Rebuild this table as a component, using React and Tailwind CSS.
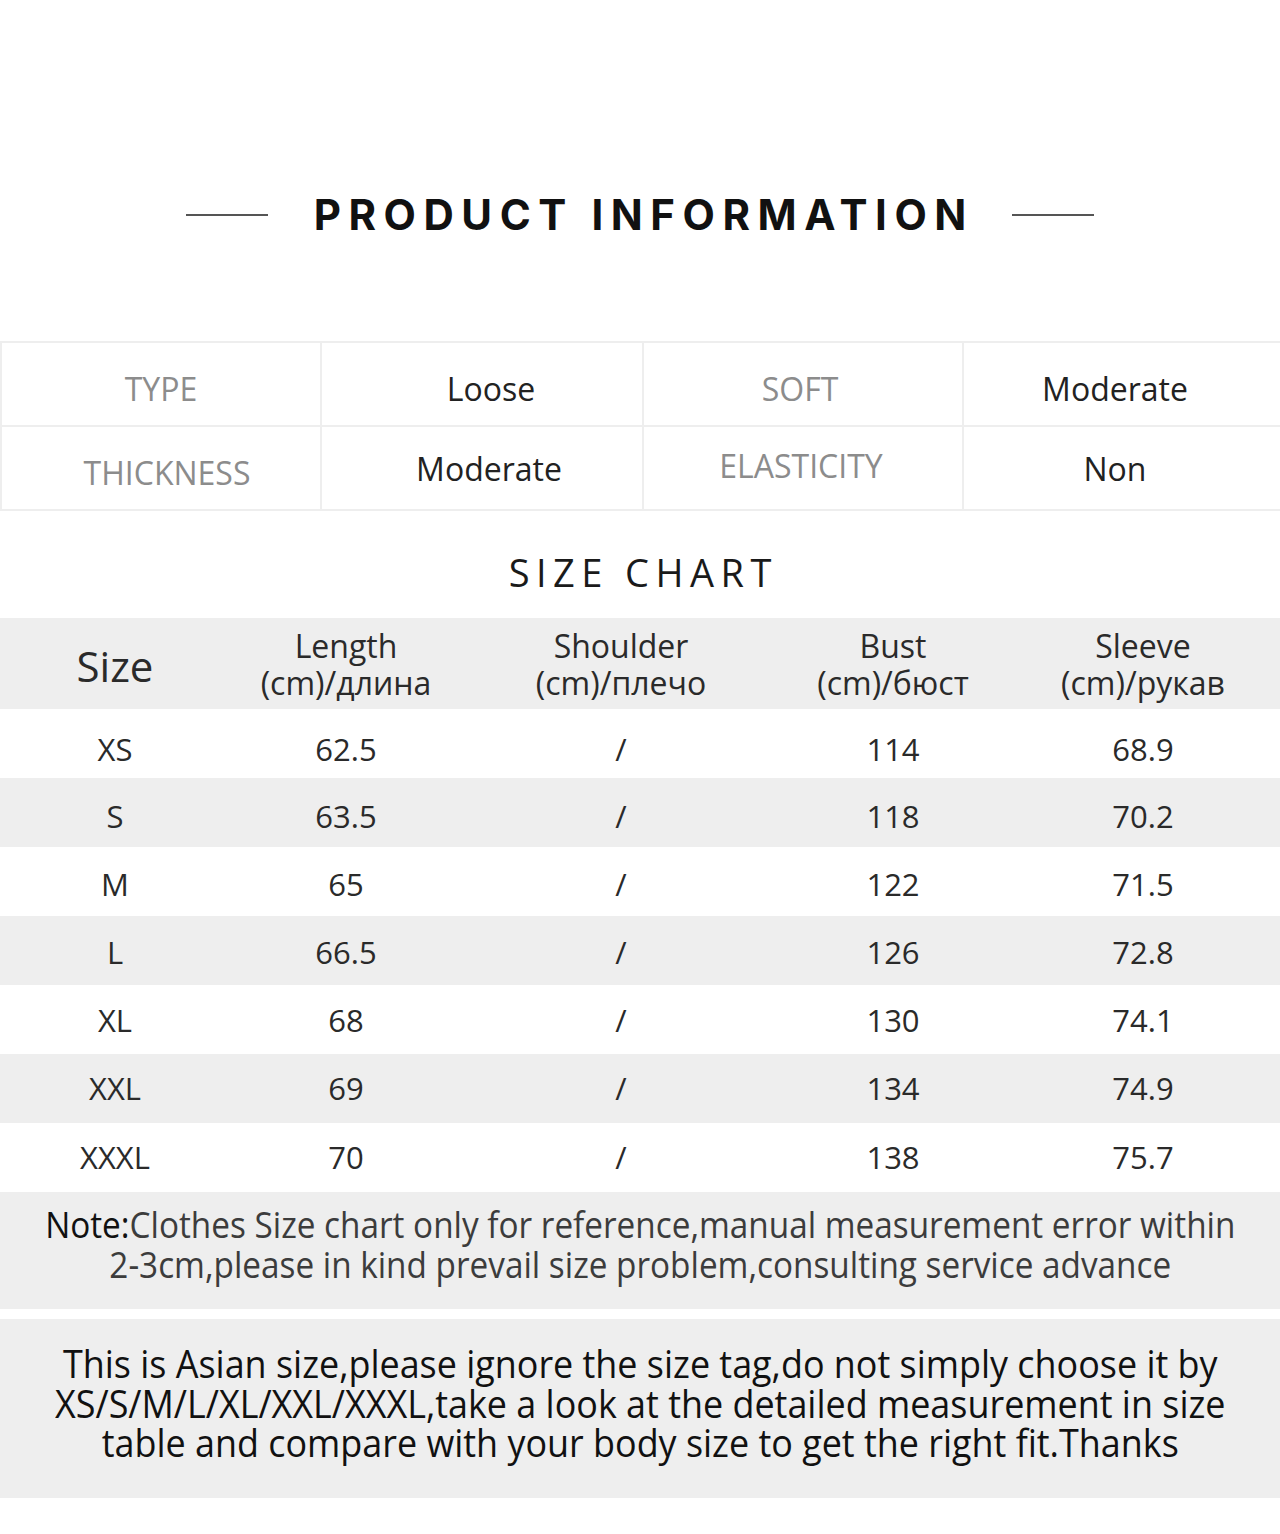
import React from "react";

const rows = [
  ["XS", "62.5", "/", "114", "68.9"],
  ["S", "63.5", "/", "118", "70.2"],
  ["M", "65", "/", "122", "71.5"],
  ["L", "66.5", "/", "126", "72.8"],
  ["XL", "68", "/", "130", "74.1"],
  ["XXL", "69", "/", "134", "74.9"],
  ["XXXL", "70", "/", "138", "75.7"],
];

const rowPad = ["pt-[12px]", "pt-[8px]", "pt-[6px]", "pt-[4px]", "pt-[2px]", "pt-0", "pt-0"];

const gridCols = "grid grid-cols-[230px_232px_318px_226px_274px]";

const info = [
  [
    { t: "TYPE", c: "text-[#8c8c8c] mt-[10px]" },
    { t: "Loose", c: "text-[#222] mt-[10px] ml-[18px]" },
    { t: "SOFT", c: "text-[#8c8c8c] mt-[10px] mr-[6px]" },
    { t: "Moderate", c: "text-[#222] mt-[10px] mr-[14px]" },
  ],
  [
    { t: "THICKNESS", c: "text-[#8c8c8c] mt-[10px] ml-[12px]" },
    { t: "Moderate", c: "text-[#222] mt-[2px] ml-[14px]" },
    { t: "ELASTICITY", c: "text-[#8c8c8c] mt-[-4px] mr-[4px]" },
    { t: "Non", c: "text-[#222] mt-[2px] mr-[14px]" },
  ],
];

export default function App() {
  return (
    <div
      className="w-[1280px] h-[1534px] bg-white overflow-hidden"
      style={{ fontFamily: "'Open Sans', 'Noto Sans', sans-serif" }}
    >
      {/* Title */}
      <div className="h-[341px] pt-[180px]">
        <div className="h-[70px] flex items-center justify-center">
          <div className="w-[82px] h-[2px] bg-[#555]" />
          <div
            className="mx-[38px] text-[42px] leading-none font-bold tracking-[0.18em] text-[#111] pl-[0.18em]"
            style={{ fontFamily: "Inter, 'Liberation Sans', sans-serif" }}
          >
            PRODUCT INFORMATION
          </div>
          <div className="w-[82px] h-[2px] bg-[#555]" />
        </div>
      </div>

      {/* Info table */}
      <div className="grid grid-cols-[320px_322px_320px_318px] border-t-2 border-l-2 border-[#eeeeee] text-[32px]">
        {info.map((r, ri) =>
          r.map((cell, ci) => (
            <div
              key={ri + "-" + ci}
              className="h-[84px] flex items-center justify-center border-r-2 border-b-2 border-[#eeeeee]"
            >
              <span className={cell.c}>{cell.t}</span>
            </div>
          ))
        )}
      </div>

      {/* Size chart title */}
      <div className="h-[107px] flex items-center justify-center pt-[14px]">
        <div className="text-[38px] leading-none tracking-[0.17em] text-[#1a1a1a] pl-[0.17em]">
          SIZE CHART
        </div>
      </div>

      {/* Header */}
      <div className={gridCols + " h-[91px] bg-[#eeeeee] text-[#2a2a2a]"}>
        <div className="flex items-center justify-center text-[42px] pt-[4px]">Size</div>
        {[
          ["Length", "(cm)/длина"],
          ["Shoulder", "(cm)/плечо"],
          ["Bust", "(cm)/бюст"],
          ["Sleeve", "(cm)/рукав"],
        ].map((h, i) => (
          <div key={i} className="flex flex-col items-center justify-center text-[32px] leading-[37px]">
            <div>{h[0]}</div>
            <div>{h[1]}</div>
          </div>
        ))}
      </div>

      {/* Rows */}
      {rows.map((r, i) => (
        <div
          key={i}
          className={
            gridCols +
            " h-[69px] text-[31px] text-[#2a2a2a] " +
            rowPad[i] +
            " " +
            (i % 2 === 1 ? "bg-[#eeeeee]" : "bg-white")
          }
        >
          {r.map((c, j) => (
            <div key={j} className="flex items-center justify-center">
              {c}
            </div>
          ))}
        </div>
      ))}

      {/* Note */}
      <div className="h-[117px] bg-[#eeeeee] flex justify-center overflow-hidden pt-[12px]">
        <div className="w-max shrink-0 text-center text-[37px] leading-[40px] text-[#3c3c3c] scale-x-[0.9] whitespace-nowrap">
          <span className="text-[#111]">Note:</span>Clothes Size chart only for reference,manual measurement error within
          <br />
          2-3cm,please in kind prevail size problem,consulting service advance
        </div>
      </div>

      <div className="h-[10px] bg-white" />

      {/* Asian size */}
      <div className="h-[179px] bg-[#eeeeee] flex justify-center overflow-hidden pt-[25px]">
        <div className="w-max shrink-0 text-center text-[38px] leading-[39.5px] text-[#111] scale-x-[0.945] whitespace-nowrap">
          This is Asian size,please ignore the size tag,do not simply choose it by
          <br />
          XS/S/M/L/XL/XXL/XXXL,take a look at the detailed measurement in size
          <br />
          table and compare with your body size to get the right fit.Thanks
        </div>
      </div>
    </div>
  );
}
